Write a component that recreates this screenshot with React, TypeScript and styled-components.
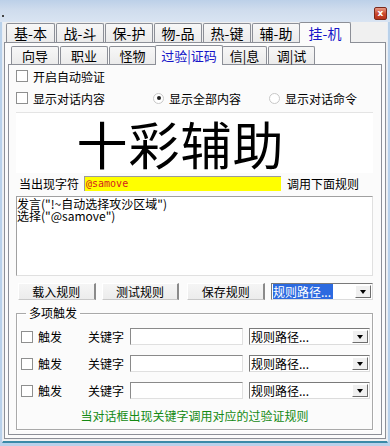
import React from "react";
import styled, { createGlobalStyle, css } from "styled-components";

const Global = createGlobalStyle`
  html, body { margin: 0; padding: 0; background: #f0f0f0; }
  body { font-family: "Noto Sans CJK SC", "Noto Sans", sans-serif; font-size: 12px; color: #000; }
  * { box-sizing: border-box; }
`;

const Window = styled.div`
  width: 390px;
  height: 446px;
  display: flex;
  flex-direction: column;
  background: #b9d1ea;
  overflow: hidden;
`;

const TitleBar = styled.div`
  height: 22px;
  flex: none;
  display: flex;
  justify-content: space-between;
  align-items: flex-start;
  padding: 7px 3px 0 2px;
  background: linear-gradient(180deg, #bcd0e8 0%, #cfdced 45%, #d9e4f2 100%);
`;

const Speck = styled.span`
  width: 2px;
  height: 2px;
  margin-top: 8px;
  background: #444;
`;

const CloseBtn = styled.div`
  width: 13px;
  height: 13px;
  border-radius: 2px;
  background: linear-gradient(180deg, #e89a86 0%, #c9452b 55%, #b8351c 100%);
  border: 1px solid #7a2a1c;
  color: #fff;
  font: bold 9px "DejaVu Sans", sans-serif;
  display: flex;
  align-items: center;
  justify-content: center;
  line-height: 1;
`;

const Frame = styled.div`
  flex: 1;
  display: flex;
  flex-direction: column;
  margin: 0 2px 3px 2px;
  border-left: 1px solid #e8eef6;
  border-right: 1px solid #e8eef6;
  background: #f0f0f0;
  padding: 0 1px 2px 1px;
  border-bottom: 2px solid #3a8aa8;
`;

const TabStrip = styled.div<{ $indent: number }>`
  display: flex;
  align-items: flex-end;
  padding-left: ${(p) => p.$indent}px;
  gap: 1px;
  height: 20px;
  flex: none;
  position: relative;
  z-index: 1;
`;

const Tab = styled.div<{ $w: number; $active?: boolean; $h: number; $fs: number }>`
  width: ${(p) => p.$w}px;
  height: ${(p) => p.$h}px;
  display: flex;
  align-items: center;
  justify-content: center;
  font-size: ${(p) => p.$fs}px;
  border: 1px solid #8c8f97;
  border-bottom: none;
  border-radius: 2px 2px 0 0;
  background: linear-gradient(180deg, #f7f7f7 0%, #ebebeb 100%);
  color: #000;
  ${(p) =>
    p.$active &&
    css`
      height: ${p.$h + 2}px;
      margin-bottom: -1px;
      background: #fbfbfb;
      color: #1515c8;
      margin-left: -2px;
      margin-right: -2px;
    `}
`;

const Panel = styled.div<{ $pad: string }>`
  flex: 1;
  display: flex;
  flex-direction: column;
  border: 1px solid #8c8f97;
  background: #fbfbfb;
  padding: ${(p) => p.$pad};
`;

const Content = styled.div`
  flex: 1;
  display: flex;
  flex-direction: column;
  padding: 0 8px 0 7px;
`;

const Row = styled.div<{ $h?: number }>`
  display: flex;
  align-items: center;
  height: ${(p) => p.$h ?? 20}px;
`;

const Check = styled.span`
  width: 12px;
  height: 12px;
  flex: none;
  border: 1px solid #8e8f8f;
  background: #fff;
  display: inline-block;
`;

const Label = styled.span<{ $ml?: number; $w?: number }>`
  margin-left: ${(p) => p.$ml ?? 0}px;
  ${(p) => (p.$w ? `width:${p.$w}px; flex:none;` : "")}
  white-space: nowrap;
  font-size: 12px;
`;

const Radio = styled.span<{ $on?: boolean }>`
  width: 11px;
  height: 11px;
  border-radius: 50%;
  border: 1px solid #c8c8c8;
  background: #fff;
  display: inline-flex;
  align-items: center;
  justify-content: center;
  flex: none;
  &::after {
    content: "";
    width: 4px;
    height: 4px;
    border-radius: 50%;
    background: ${(p) => (p.$on ? "#222" : "transparent")};
  }
`;

const Banner = styled.div`
  height: 61px;
  margin-top: 3px;
  background: #fff;
  border-top: 1px solid #e4e4e4;
  display: flex;
  align-items: center;
  justify-content: center;
  font-size: 51px;
  font-weight: 400;
  letter-spacing: 1px;
  padding-right: 28px;
  line-height: 1;
`;

const YellowInput = styled.div`
  width: 197px;
  height: 15px;
  background: #ffff00;
  border-top: 1px solid #9a9a9a;
  border-left: 1px solid #9a9a9a;
  color: #d42020;
  font: 10px "DejaVu Sans Mono", monospace;
  display: flex;
  align-items: center;
  padding-left: 1px;
  margin: 0 6px 0 5px;
`;

const Script = styled.div`
  height: 80px;
  margin-top: 3px;
  background: #fff;
  border: 1px solid #a0a0a0;
  border-right-color: #e0e0e0;
  border-bottom-color: #e0e0e0;
  font-size: 12px;
  line-height: 12px;
  padding: 1px 0 0 0;
  white-space: pre;
`;

const ButtonRow = styled.div`
  display: flex;
  align-items: center;
  gap: 6px;
  margin-top: 7px;
  height: 17px;
  padding-left: 2px;
  flex: none;
`;

const Btn = styled.div<{ $extra?: number }>`
  width: 80px;
  height: 17px;
  margin-left: ${(p) => p.$extra ?? 0}px;
  display: flex;
  align-items: center;
  justify-content: center;
  background: linear-gradient(180deg, #f5f5f5, #ececec);
  border-top: 1px solid #fff;
  border-left: 1px solid #fff;
  border-right: 2px solid #8a8a8a;
  border-bottom: 1px solid #c8c8c8;
  font-size: 12px;
`;

const Combo = styled.div<{ $w: number }>`
  width: ${(p) => p.$w}px;
  height: 17px;
  display: flex;
  align-items: stretch;
  background: #fff;
  border: 1px solid #7a7a7a;
  border-right-color: #dcdcdc;
  border-bottom-color: #dcdcdc;
  flex: none;
`;

const ComboText = styled.div<{ $sel?: boolean }>`
  flex: 1;
  display: flex;
  align-items: center;
  font-size: 12px;
  padding-left: 1px;
  white-space: nowrap;
  overflow: hidden;
  span {
    ${(p) =>
      p.$sel &&
      css`
        background: #2c6ae0;
        color: #fff;
        padding-right: 2px;
      `}
  }
`;

const Arrow = styled.div`
  width: 16px;
  margin: 1px;
  background: #f0f0f0;
  border-top: 1px solid #fff;
  border-left: 1px solid #fff;
  border-right: 1px solid #6e6e6e;
  border-bottom: 1px solid #6e6e6e;
  display: flex;
  align-items: center;
  justify-content: center;
  &::after {
    content: "";
    border-left: 3.5px solid transparent;
    border-right: 3.5px solid transparent;
    border-top: 4px solid #000;
  }
`;

const Group = styled.fieldset`
  margin: 6px 0 4px 0;
  padding: 8px 0 0 4px;
  border: 1px solid #a9a9a9;
  box-shadow: inset 1px 1px 0 #fff, 1px 1px 0 #fff;
  flex: 1;
  display: flex;
  flex-direction: column;
  min-width: 0;
`;

const Legend = styled.legend`
  padding: 0 3px;
  margin-left: 5px;
  font-size: 12px;
  line-height: 14px;
`;

const TriggerRow = styled.div`
  display: flex;
  align-items: center;
  height: 17px;
  margin-bottom: 10px;
`;

const KeyInput = styled.div`
  width: 113px;
  height: 17px;
  background: #fff;
  border: 1px solid #8a8a8a;
  border-right-color: #e0e0e0;
  border-bottom-color: #e0e0e0;
  margin: 0 6px 0 0;
  flex: none;
`;

const Note = styled.div`
  text-align: center;
  color: #148a14;
  font-size: 12px;
  margin-top: -2px;
  padding-right: 4px;
`;

const topTabs = [
  { t: "基-本", w: 49 },
  { t: "战-斗", w: 48 },
  { t: "保-护", w: 48 },
  { t: "物-品", w: 48 },
  { t: "热-键", w: 48 },
  { t: "辅-助", w: 48 },
  { t: "挂-机", w: 52, a: true },
];

const subTabs = [
  { t: "向导", w: 48 },
  { t: "职业", w: 48 },
  { t: "怪物", w: 47 },
  { t: "过验|证码", w: 68, a: true },
  { t: "信|息", w: 45 },
  { t: "调|试", w: 47 },
];

export default function App() {
  return (
    <>
      <Global />
      <Window>
        <TitleBar>
          <Speck />
          <CloseBtn>x</CloseBtn>
        </TitleBar>
        <Frame>
          <TabStrip $indent={2}>
            {topTabs.map((x) => (
              <Tab key={x.t} $w={x.w} $h={19} $fs={14} $active={x.a}>
                {x.t}
              </Tab>
            ))}
          </TabStrip>
          <Panel $pad="1px 3px 3px 3px">
            <TabStrip $indent={3}>
              {subTabs.map((x) => (
                <Tab key={x.t} $w={x.w} $h={18} $fs={13} $active={x.a}>
                  {x.t}
                </Tab>
              ))}
            </TabStrip>
            <Panel $pad="0">
              <Content>
                <Row $h={22}>
                  <Check />
                  <Label $ml={5}>开启自动验证</Label>
                </Row>
                <Row $h={22}>
                  <Check />
                  <Label $ml={5} $w={120}>显示对话内容</Label>
                  <Radio $on />
                  <Label $ml={5} $w={100}>显示全部内容</Label>
                  <Radio />
                  <Label $ml={5}>显示对话命令</Label>
                </Row>
                <Banner>十彩辅助</Banner>
                <Row $h={20}>
                  <Label $ml={3}>当出现字符</Label>
                  <YellowInput>@samove</YellowInput>
                  <Label>调用下面规则</Label>
                </Row>
                <Script>{'发言("!~自动选择攻沙区域")\n选择("@samove")'}</Script>
                <ButtonRow>
                  <Btn>载入规则</Btn>
                  <Btn>测试规则</Btn>
                  <Btn $extra={2}>保存规则</Btn>
                  <Combo $w={102}>
                    <ComboText $sel>
                      <span>规则路径...</span>
                    </ComboText>
                    <Arrow />
                  </Combo>
                </ButtonRow>
                <Group>
                  <Legend>多项触发</Legend>
                  {[0, 1, 2].map((i) => (
                    <TriggerRow key={i}>
                      <Check />
                      <Label $ml={5} $w={50}>触发</Label>
                      <Label $w={42}>关键字</Label>
                      <KeyInput />
                      <Combo $w={121}>
                        <ComboText>
                          <span>规则路径...</span>
                        </ComboText>
                        <Arrow />
                      </Combo>
                    </TriggerRow>
                  ))}
                  <Note>当对话框出现关键字调用对应的过验证规则</Note>
                </Group>
              </Content>
            </Panel>
          </Panel>
        </Frame>
      </Window>
    </>
  );
}
